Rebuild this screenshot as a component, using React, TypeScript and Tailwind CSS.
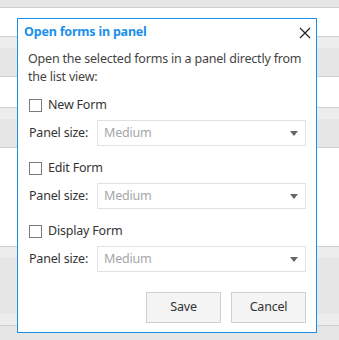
import React from "react";

const forms = ["New Form", "Edit Form", "Display Form"];

function Row({ label }: { label: string }) {
  return (
    <div className="flex flex-col">
      <label className="flex items-center h-[13px] gap-[6px]">
        <span className="w-[13px] h-[13px] border border-[#7a7a7a] bg-white shrink-0" />
        <span className="text-[12.5px] text-[#333] leading-none">{label}</span>
      </label>
      <div className="flex items-center h-[26px] mt-[8px]">
        <span className="w-[68px] text-[12.5px] text-[#333] leading-none">Panel size:</span>
        <div className="flex-1 h-[26px] border border-[#e1e1e1] flex items-center justify-between pl-[6px] pr-[7px]">
          <span className="text-[12.5px] text-[#a6a6a6] leading-none">Medium</span>
          <svg width="8" height="5" viewBox="0 0 8 5">
            <path d="M0 0 H8 L4 5 Z" fill="#666" />
          </svg>
        </div>
      </div>
    </div>
  );
}

export default function App() {
  return (
    <div
      className="relative w-[339px] h-[340px] overflow-hidden bg-[#e6e6e6]"
      style={{ fontFamily: '"Noto Sans", "Open Sans", sans-serif' }}
    >
      {/* list view behind */}
      <div className="flex flex-col">
        <div className="h-[8px] bg-[#e6e6e6] border-b border-[#cfcfcf]" />
        <div className="h-[29px] bg-white border-b border-[#cfcfcf]" />
        <div className="h-[11px] bg-[#ededed]" />
        <div className="h-[29px] bg-[#e6e6e6] border-b border-[#cfcfcf]" />
        <div className="h-[31px] bg-white border-b border-[#cfcfcf]" />
        <div className="h-[11px] bg-[#ededed]" />
        <div className="h-[29px] bg-[#e6e6e6] border-b border-[#cfcfcf]" />
        <div className="h-[99px] bg-white border-b border-[#cfcfcf]" />
        <div className="h-[11px] bg-[#ededed]" />
        <div className="h-[56px] bg-[#e6e6e6]" />
        <div className="h-[12px] bg-[#ededed] border-b border-[#cfcfcf]" />
        <div className="h-[15px] bg-[#e6e6e6]" />
      </div>

      {/* dialog */}
      <div className="absolute left-[17px] top-[18px] w-[300px] h-[315px] bg-white border border-[#1a8fea] flex flex-col tracking-[-0.2px]">
        <div className="flex items-start justify-between pl-[6px] pr-[5px] pt-[4px] h-[22px]">
          <span className="text-[12.5px] font-bold text-[#1a8fea] leading-[18px]">Open forms in panel</span>
          <svg width="12" height="12" viewBox="0 0 12 12" className="mt-[4px]">
            <path d="M1 1 L11 11 M11 1 L1 11" stroke="#222" strokeWidth="1.2" />
          </svg>
        </div>
        <div className="px-[10px] pt-[9px] flex flex-col">
          <p className="text-[12.5px] text-[#444] leading-[18px]">
            Open the selected forms in a panel directly from the list view:
          </p>
          <div className="flex flex-col gap-[16px] mt-[13px] pl-[1px]">
            {forms.map((f) => (
              <Row key={f} label={f} />
            ))}
          </div>
          <div className="flex justify-end gap-[10px] mt-[20px]">
            <button className="w-[75px] h-[31px] bg-[#f4f4f4] border border-[#d0d0d0] text-[12.5px] text-[#333]">
              Save
            </button>
            <button className="w-[75px] h-[31px] bg-[#f4f4f4] border border-[#d0d0d0] text-[12.5px] text-[#333]">
              Cancel
            </button>
          </div>
        </div>
      </div>
    </div>
  );
}
